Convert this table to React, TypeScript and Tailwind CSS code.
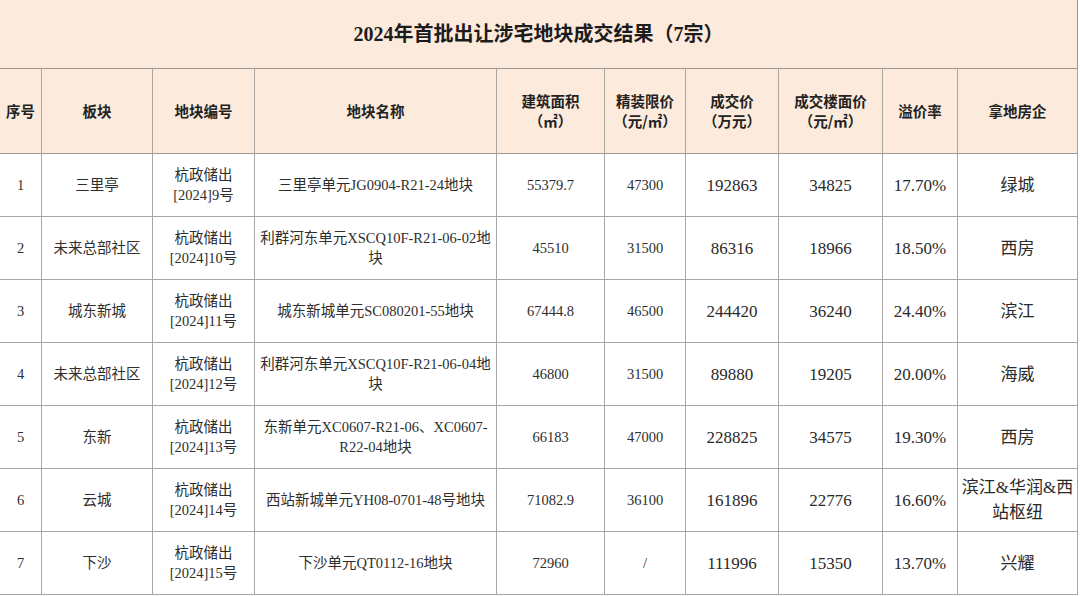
import React from 'react';

type Row = {
  no: string;
  area: string;
  code: string[];
  name: string[];
  size: string;
  cap: string;
  price: string;
  unit: string;
  premium: string;
  buyer: string[];
};

const rows: Row[] = [
  {
    no: '1',
    area: '三里亭',
    code: ['杭政储出', '[2024]9号'],
    name: ['三里亭单元JG0904-R21-24地块'],
    size: '55379.7',
    cap: '47300',
    price: '192863',
    unit: '34825',
    premium: '17.70%',
    buyer: ['绿城'],
  },
  {
    no: '2',
    area: '未来总部社区',
    code: ['杭政储出', '[2024]10号'],
    name: ['利群河东单元XSCQ10F-R21-06-02地', '块'],
    size: '45510',
    cap: '31500',
    price: '86316',
    unit: '18966',
    premium: '18.50%',
    buyer: ['西房'],
  },
  {
    no: '3',
    area: '城东新城',
    code: ['杭政储出', '[2024]11号'],
    name: ['城东新城单元SC080201-55地块'],
    size: '67444.8',
    cap: '46500',
    price: '244420',
    unit: '36240',
    premium: '24.40%',
    buyer: ['滨江'],
  },
  {
    no: '4',
    area: '未来总部社区',
    code: ['杭政储出', '[2024]12号'],
    name: ['利群河东单元XSCQ10F-R21-06-04地', '块'],
    size: '46800',
    cap: '31500',
    price: '89880',
    unit: '19205',
    premium: '20.00%',
    buyer: ['海威'],
  },
  {
    no: '5',
    area: '东新',
    code: ['杭政储出', '[2024]13号'],
    name: ['东新单元XC0607-R21-06、XC0607-', 'R22-04地块'],
    size: '66183',
    cap: '47000',
    price: '228825',
    unit: '34575',
    premium: '19.30%',
    buyer: ['西房'],
  },
  {
    no: '6',
    area: '云城',
    code: ['杭政储出', '[2024]14号'],
    name: ['西站新城单元YH08-0701-48号地块'],
    size: '71082.9',
    cap: '36100',
    price: '161896',
    unit: '22776',
    premium: '16.60%',
    buyer: ['滨江&华润&西', '站枢纽'],
  },
  {
    no: '7',
    area: '下沙',
    code: ['杭政储出', '[2024]15号'],
    name: ['下沙单元QT0112-16地块'],
    size: '72960',
    cap: '/',
    price: '111996',
    unit: '15350',
    premium: '13.70%',
    buyer: ['兴耀'],
  },
];

const serif = "font-['Liberation_Serif','Noto_Sans_CJK_SC',serif]";
const sans = "font-['Noto_Sans_CJK_SC','Noto_Sans',sans-serif]";

// column widths, border included
const W = [
  'w-[42px]',
  'w-[111px]',
  'w-[102px]',
  'w-[242px]',
  'w-[108px]',
  'w-[81px]',
  'w-[93px]',
  'w-[104px]',
  'w-[75px]',
  'w-[120px]',
];

function Cell({
  w,
  lines,
  cls,
}: {
  w: string;
  lines: string[];
  cls: string;
}) {
  return (
    <div
      className={`${w} flex shrink-0 flex-col items-center justify-center border-r border-[#aaa6a2] px-[2px] text-center whitespace-nowrap ${cls}`}
    >
      {lines.map((l, i) => (
        <span key={i} className="block">
          {l}
        </span>
      ))}
    </div>
  );
}

const heads: string[][] = [
  ['序号'],
  ['板块'],
  ['地块编号'],
  ['地块名称'],
  ['建筑面积', '（㎡）'],
  ['精装限价', '（元/㎡）'],
  ['成交价', '（万元）'],
  ['成交楼面价', '（元/㎡）'],
  ['溢价率'],
  ['拿地房企'],
];

export default function App() {
  const small = `${serif} text-[14.5px] leading-[20px] text-[#2e2e2e]`;
  const big = `${serif} text-[17px] leading-[25px] text-[#2a2a2a]`;

  return (
    <div className="min-h-[596px] w-[1080px] bg-white">
      <div className="w-[1078px]">
        {/* title */}
        <div className="flex h-[69px] items-center justify-center border-r border-b border-[#9f9892] bg-[#fcebdc]">
          <h1 className={`${serif} text-[20px] font-bold text-[#1c1c1c]`}>
            2024年首批出让涉宅地块成交结果（7宗）
          </h1>
        </div>

        {/* header */}
        <div className="flex h-[85px] border-b border-[#9f9892] bg-[#fcebdc]">
          {heads.map((h, i) => (
            <Cell
              key={i}
              w={W[i]}
              lines={h}
              cls={`${sans} text-[14.5px] leading-[20px] font-bold text-[#222] border-[#a8a09a]`}
            />
          ))}
        </div>

        {/* body */}
        {rows.map((r) => (
          <div key={r.no} className="flex h-[63px] border-b border-[#aaa6a2]">
            <Cell w={W[0]} lines={[r.no]} cls={small} />
            <Cell w={W[1]} lines={[r.area]} cls={small} />
            <Cell w={W[2]} lines={r.code} cls={small} />
            <Cell w={W[3]} lines={r.name} cls={`${small} text-[14.3px]`} />
            <Cell w={W[4]} lines={[r.size]} cls={small} />
            <Cell w={W[5]} lines={[r.cap]} cls={small} />
            <Cell w={W[6]} lines={[r.price]} cls={big} />
            <Cell w={W[7]} lines={[r.unit]} cls={big} />
            <Cell w={W[8]} lines={[r.premium]} cls={big} />
            <Cell w={W[9]} lines={r.buyer} cls={big} />
          </div>
        ))}
      </div>
    </div>
  );
}
